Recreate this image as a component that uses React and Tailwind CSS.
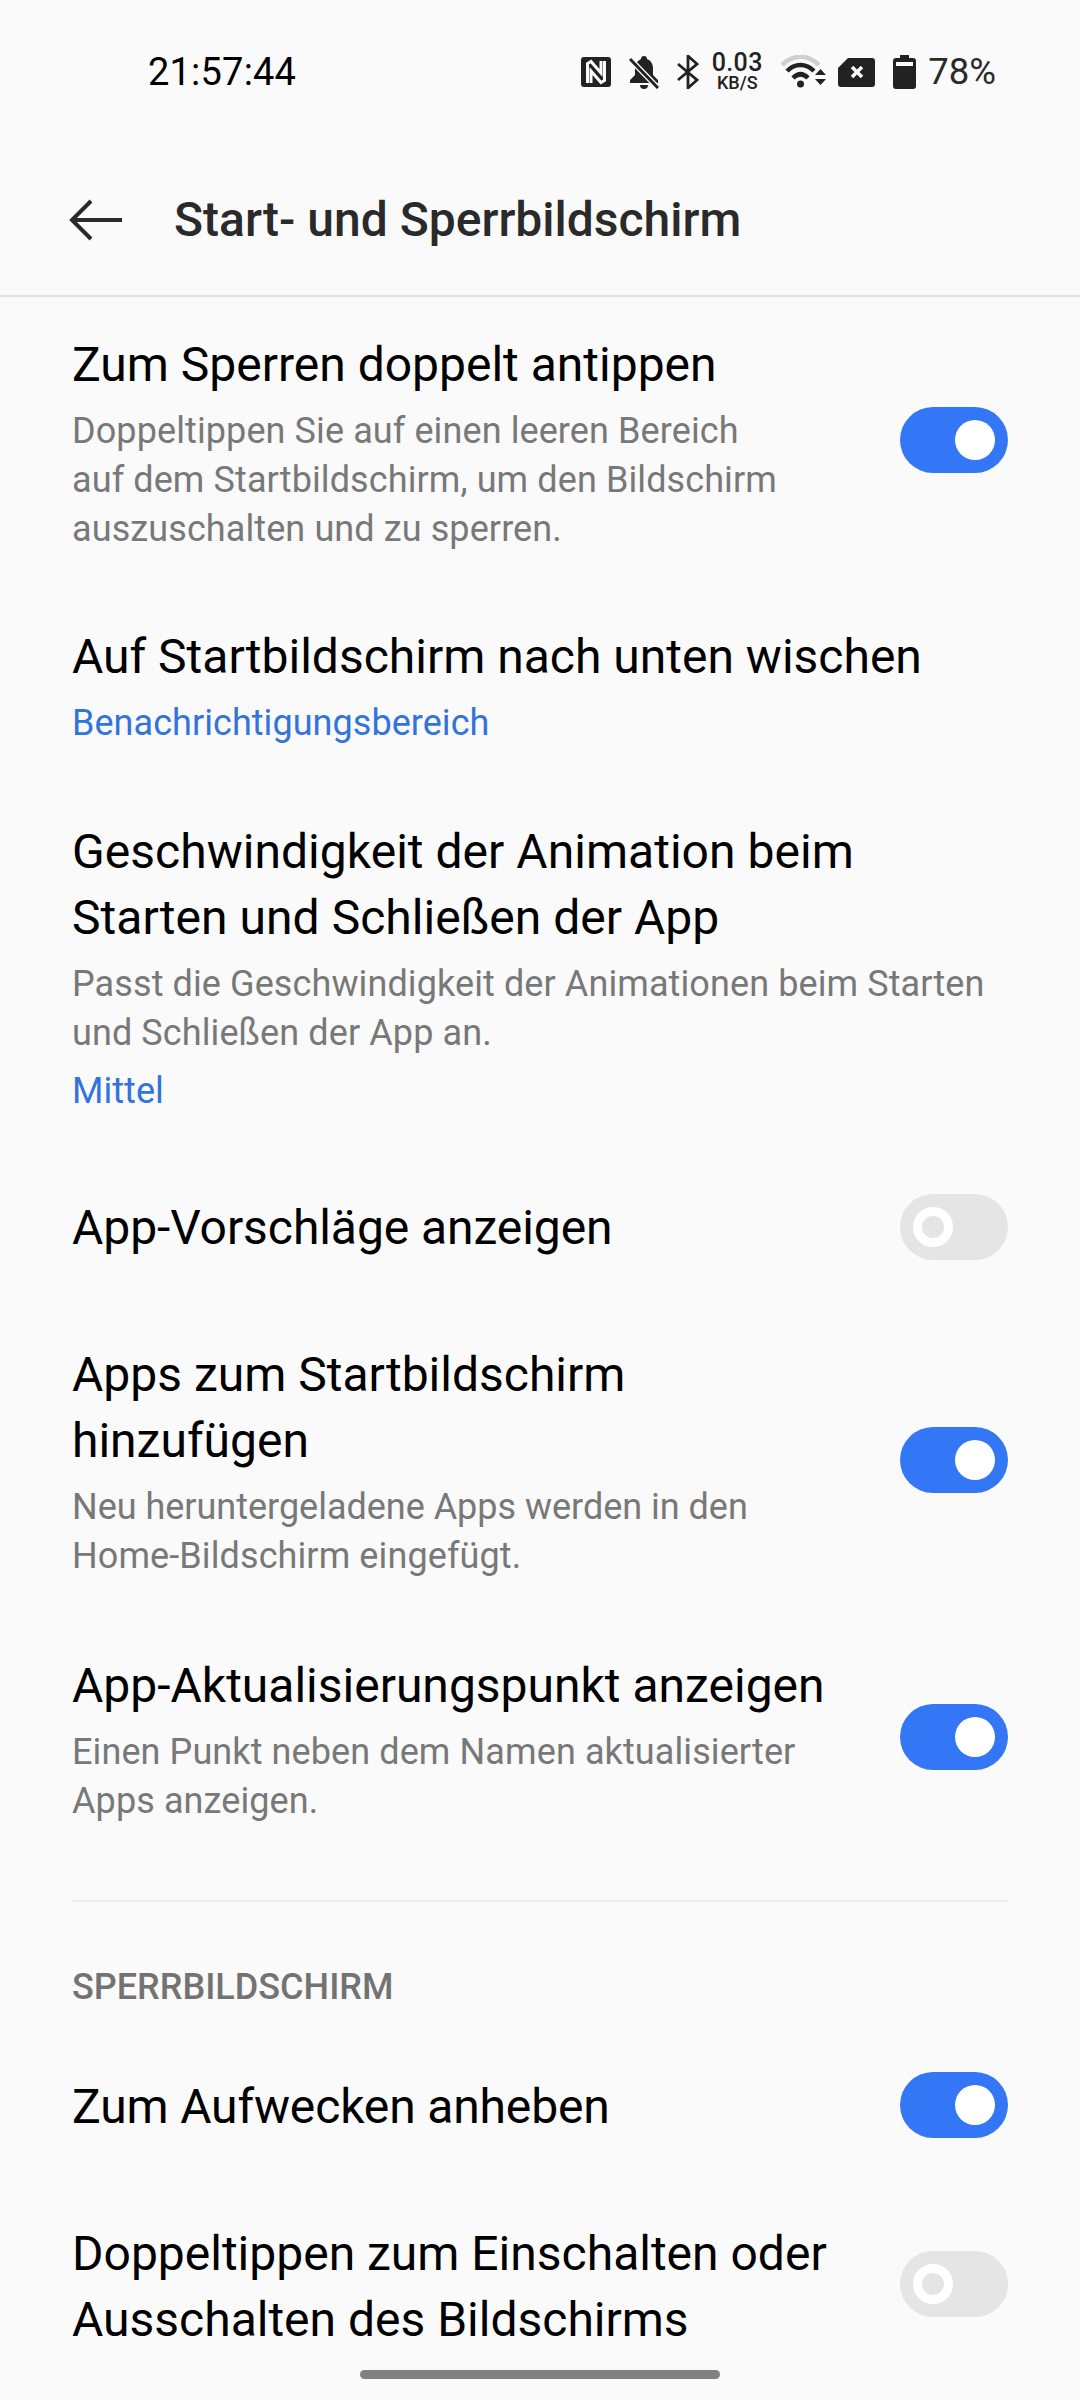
const font = { fontFamily: "Roboto, sans-serif" };

function Toggle({ on, className = "" }) {
  return on ? (
    <div className={"w-[108px] h-[66px] rounded-full bg-[#3377f6] flex items-center justify-end pr-[13px] shrink-0 " + className}>
      <div className="w-[40px] h-[40px] rounded-full bg-white" />
    </div>
  ) : (
    <div className={"w-[108px] h-[66px] rounded-full bg-[#e5e5e5] flex items-center pl-[13px] shrink-0 " + className}>
      <div className="w-[40px] h-[40px] rounded-full border-[9px] border-white" />
    </div>
  );
}

function Title({ children, className = "" }) {
  return <div className={"text-[48px] leading-[66px] text-black " + className}>{children}</div>;
}
function Sub({ children }) {
  return <div className="text-[36px] leading-[49px] text-[#787878] tracking-[0.1px] mt-[9px]">{children}</div>;
}
function Link({ children }) {
  return <div className="text-[36px] leading-[49px] text-[#3273dc] tracking-[0.05px] mt-[9px]">{children}</div>;
}

function StatusBar() {
  return (
    <div className="h-[144px] flex items-center pl-[148px] pr-[84px] text-[#222]">
      <div className="text-[38px] leading-[44px] text-black tracking-[0.2px]">21:57:44</div>
      <div className="ml-auto flex items-center">
        <svg width="30" height="30" viewBox="0 0 30 30">
          <rect width="30" height="30" rx="3" fill="#222" />
          <path d="M6.500 26V6.500l3.500-2 10 11.500V4M23.500 4v19.500l-3.500 2L10 14v12" fill="none" stroke="#fafafa" strokeWidth="3" />
        </svg>
        <svg className="ml-[18px]" width="30" height="33" viewBox="0 0 30 33">
          <path d="M15 0a3 3 0 0 1 3 3c4 1.500 6 5 6 10v6l5 5v3H1v-3l5-5v-7c0-4 2-7 6-9a3 3 0 0 1 3-3zM11 29h8a4 4 0 0 1-8 0z" fill="#222" />
          <path d="M1 3l28 29" stroke="#fafafa" strokeWidth="5.500" />
          <path d="M1 3l28 29" stroke="#222" strokeWidth="3" />
        </svg>
        <svg className="ml-[18px]" width="22" height="34" viewBox="0 0 22 34">
          <path d="M1 9l19 16-9 8V1l9 8L1 25" fill="none" stroke="#222" strokeWidth="2.800" />
        </svg>
        <div className="ml-[13px] w-[50px] flex flex-col items-center text-[#222]">
          <div className="text-[25px] leading-[22px] font-medium tracking-[0.4px]">0.03</div>
          <div className="text-[18px] leading-[18px] font-medium">KB/S</div>
        </div>
        <svg className="ml-[18px]" width="46" height="34" viewBox="0 0 46 34">
          <path d="M2 10C13 -1 28 -1 39 10" fill="none" stroke="#cfcfcf" strokeWidth="4.500" />
          <path d="M7 16c8-8 19-8 27 0" fill="none" stroke="#222" strokeWidth="4.500" />
          <path d="M13 23c5-5 10-5 15 0" fill="none" stroke="#222" strokeWidth="4.500" />
          <circle cx="20.500" cy="29" r="3.500" fill="#222" />
          <path d="M35 20l5.500-6 5.500 6zM35 24h11l-5.500 6z" fill="#222" />
        </svg>
        <svg className="ml-[12px]" width="37" height="29" viewBox="0 0 37 29">
          <path d="M10 0h24a3 3 0 0 1 3 3v23a3 3 0 0 1-3 3H3a3 3 0 0 1-3-3V10z" fill="#222" />
          <path d="M14 9l10 10M24 9L14 19" stroke="#fafafa" strokeWidth="3.500" />
        </svg>
        <svg className="ml-[18px]" width="23" height="34" viewBox="0 0 23 34">
          <path d="M7 0h9v3h4a3 3 0 0 1 3 3v25a3 3 0 0 1-3 3H3a3 3 0 0 1-3-3V6a3 3 0 0 1 3-3h4z" fill="#222" />
          <rect x="3" y="7" width="17" height="4" fill="#fafafa" />
        </svg>
        <div className="ml-[12px] text-[36.5px] leading-[44px] text-[#2a2a2a]">78%</div>
      </div>
    </div>
  );
}

export default function App() {
  return (
    <div style={font} className="w-[1080px] h-[2400px] bg-[#fafafa] overflow-hidden flex flex-col">
      <StatusBar />
      <div className="h-[153px] flex items-center border-b-2 border-[#e0e0e0] pl-[69px]">
        <svg width="54" height="42" viewBox="0 0 54 42">
          <path d="M53 21H4M22 2L3 21l19 19" fill="none" stroke="#2a2a2a" strokeWidth="4" />
        </svg>
        <div className="ml-[51px] text-[48px] leading-[66px] font-medium text-[#2a2a2a]">Start- und Sperrbildschirm</div>
      </div>

      <div className="px-[72px] flex flex-col">
        <div className="pt-[35px] flex items-center justify-between">
          <div className="w-[720px]">
            <Title>Zum Sperren doppelt antippen</Title>
            <Sub>Doppeltippen Sie auf einen leeren Bereich<br />auf dem Startbildschirm, um den Bildschirm<br />auszuschalten und zu sperren.</Sub>
          </div>
          <Toggle on className="mt-[-6px]" />
        </div>

        <div className="pt-[70px]">
          <Title>Auf Startbildschirm nach unten wischen</Title>
          <Link>Benachrichtigungsbereich</Link>
        </div>

        <div className="pt-[71px]">
          <Title className="tracking-[0.03px]">Geschwindigkeit der Animation beim<br />Starten und Schließen der App</Title>
          <Sub>Passt die Geschwindigkeit der Animationen beim Starten<br />und Schließen der App an.</Sub>
          <Link>Mittel</Link>
        </div>

        <div className="pt-[79px] flex items-center justify-between">
          <Title className="tracking-[-0.07px]">App-Vorschläge anzeigen</Title>
          <Toggle className="mt-[-2px]" />
        </div>

        <div className="pt-[81px] flex items-center justify-between">
          <div className="w-[720px]">
            <Title>Apps zum Startbildschirm<br />hinzufügen</Title>
            <Sub><span className="tracking-[-0.02px]">Neu heruntergeladene Apps werden in den</span><br />Home-Bildschirm eingefügt.</Sub>
          </div>
          <Toggle on className="mt-[-3px]" />
        </div>

        <div className="pt-[72px] flex items-center justify-between">
          <div className="w-[800px]">
            <Title>App-Aktualisierungspunkt anzeigen</Title>
            <Sub>Einen Punkt neben dem Namen aktualisierter<br />Apps anzeigen.</Sub>
          </div>
          <Toggle on className="mt-[-5px]" />
        </div>

        <div className="mt-[74px] h-[2px] bg-[#ececec]" />

        <div className="mt-[65px] text-[36px] leading-[40px] font-medium text-[#737373]">SPERRBILDSCHIRM</div>

        <div className="pt-[67px] flex items-center justify-between">
          <Title className="tracking-[-0.15px]">Zum Aufwecken anheben</Title>
          <Toggle on className="mt-[-4px]" />
        </div>

        <div className="pt-[81px] flex items-center justify-between">
          <Title>Doppeltippen zum Einschalten oder<br />Ausschalten des Bildschirms</Title>
          <Toggle className="mt-[-6px]" />
        </div>
      </div>

      <div className="absolute left-[360px] top-[2370px] w-[360px] h-[9px] rounded-full bg-[#808080]" />
    </div>
  );
}
